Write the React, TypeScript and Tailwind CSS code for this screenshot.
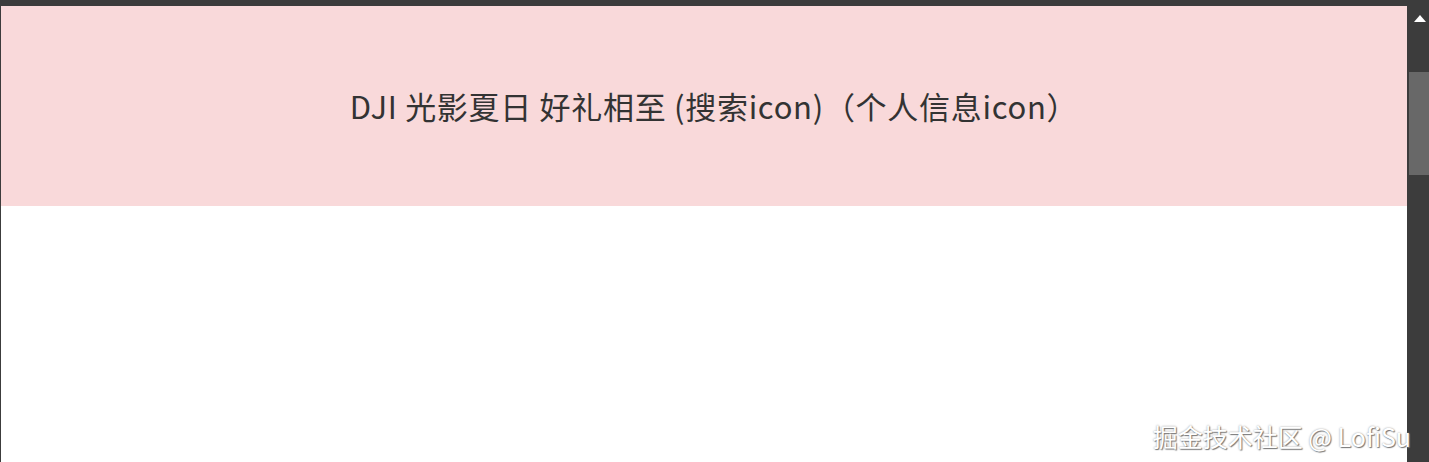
export default function App() {
  return (
    <div className="relative flex h-[462px] w-full flex-col overflow-hidden bg-[#3c3c3c] font-['Noto_Sans_CJK_SC',sans-serif]">
      {/* window top edge */}
      <div className="h-[6px] shrink-0" />
      <div className="flex flex-1">
        <div className="w-px shrink-0" />
        {/* page */}
        <main className="flex flex-1 flex-col bg-white">
          <header className="flex h-[200px] items-center justify-center bg-[#f9d9da] pb-[2px] pl-[20px]">
            <h1 className="text-[31px] leading-none tracking-[0.7px] text-[#333]">
              DJI 光影夏日 好礼相至 (搜索icon)（个人信息icon）
            </h1>
          </header>
        </main>
        {/* scrollbar */}
        <div className="flex w-[22px] shrink-0 flex-col items-end">
          <div className="flex h-[16px] w-full items-end justify-center pl-[3px]">
            <svg width="12" height="7" viewBox="0 0 12 7">
              <path d="M6 0 L12 7 L0 7 Z" fill="#ffffff" />
            </svg>
          </div>
          <div className="mt-[50px] h-[103px] w-[20px] bg-[#686868]" />
        </div>
      </div>
      <div className="absolute bottom-[13px] right-[18px] text-[25px] leading-none text-white [text-shadow:1px_1px_1px_#777,0_0_2px_#999]">
        掘金技术社区 @ LofiSu
      </div>
    </div>
  );
}
